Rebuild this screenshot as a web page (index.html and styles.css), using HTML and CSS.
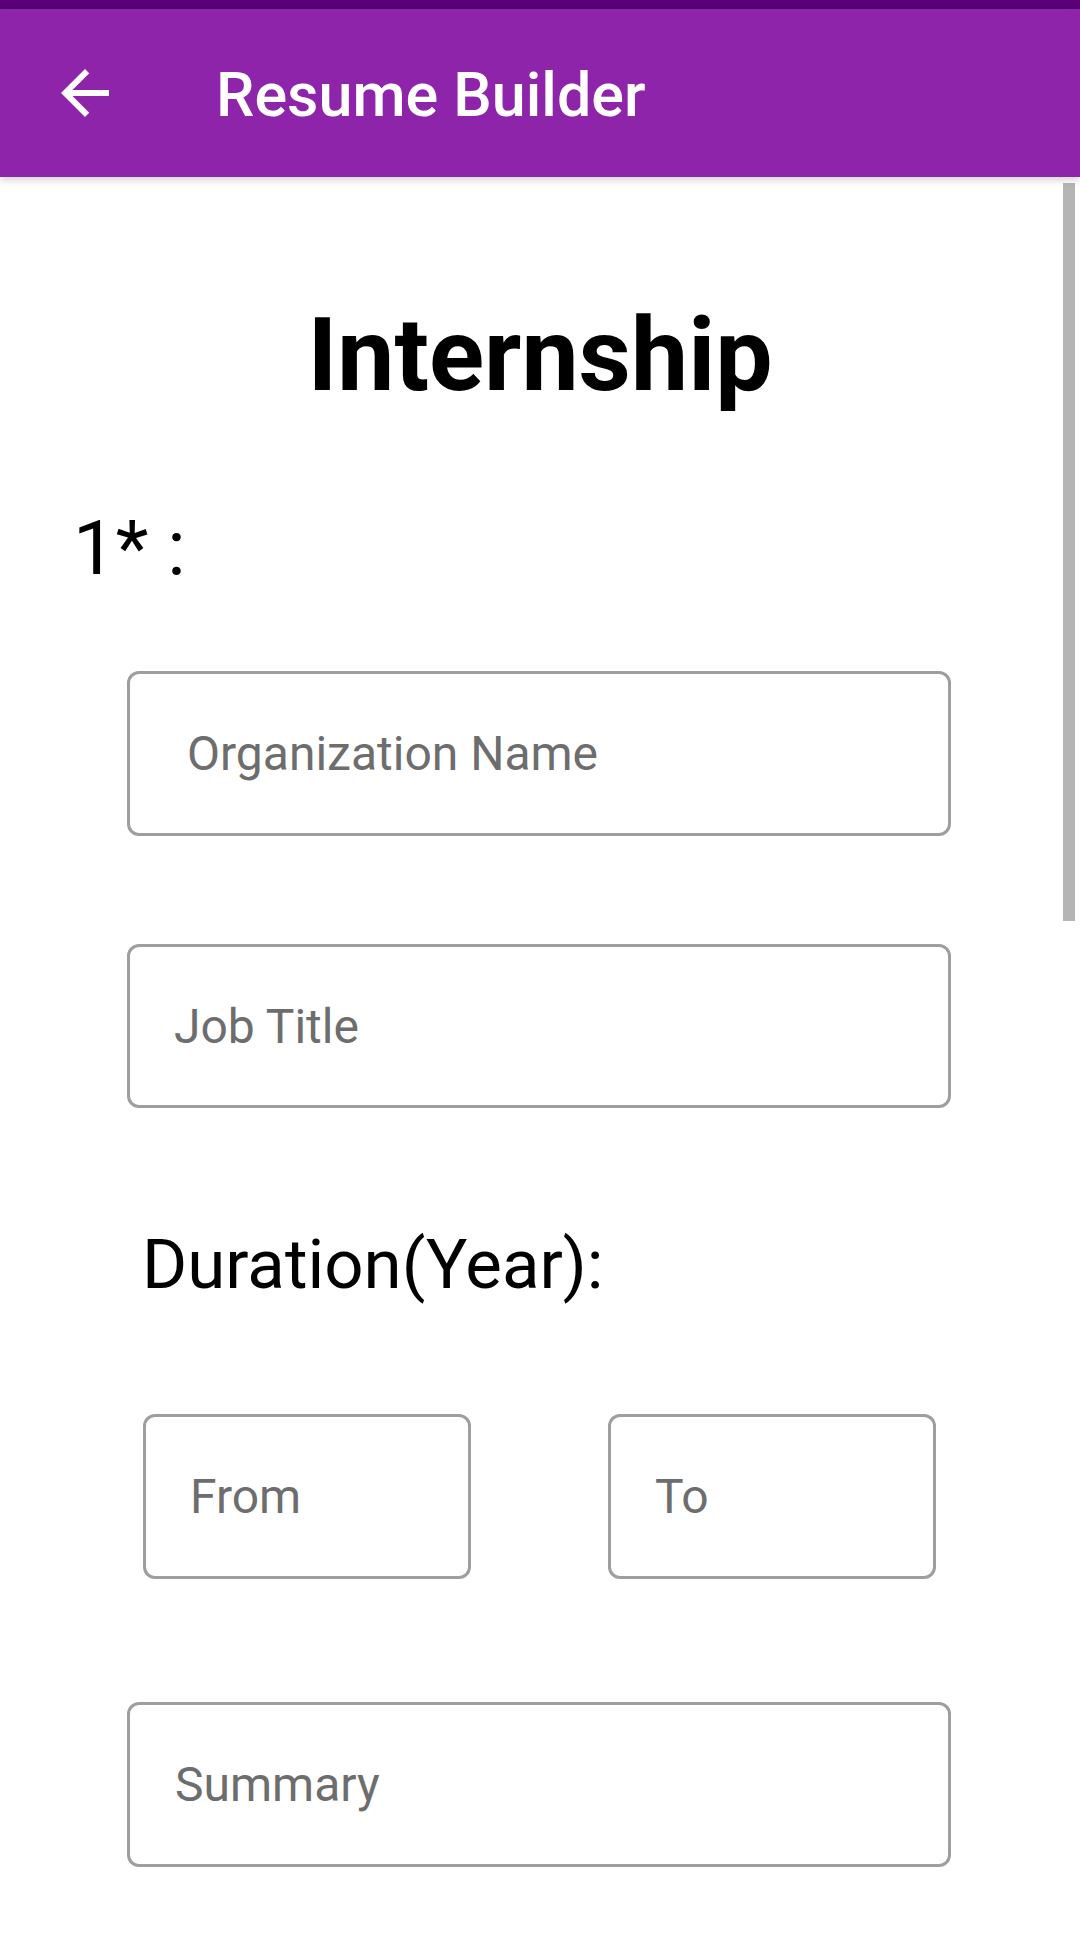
FILE: index.html
```html
<!DOCTYPE html>
<html lang="en">
<head>
<meta charset="utf-8">
<title>Resume Builder</title>
<link rel="stylesheet" href="styles.css">
</head>
<body>
<div class="statusbar"></div>
<header class="appbar">
  <svg class="back" viewBox="0 0 24 24" width="72" height="72" aria-hidden="true">
    <path d="M20 11H7.83l5.59-5.59L12 4l-8 8 8 8 1.41-1.41L7.83 13H20v-2z" fill="#ffffff"/>
  </svg>
  <h1 class="apptitle">Resume Builder</h1>
</header>
<main class="screen">
  <div class="scrollthumb"></div>
  <h2 class="heading">Internship</h2>
  <div class="entry-label">1* :</div>
  <div class="form">
    <input class="field field-org" type="text" placeholder="Organization Name">
    <input class="field field-job" type="text" placeholder="Job Title">
  </div>
  <div class="duration">
    <div class="duration-label">Duration(Year):</div>
    <div class="duration-row">
      <input class="field field-small" type="text" placeholder="From">
      <input class="field field-small" type="text" placeholder="To">
    </div>
  </div>
  <div class="form">
    <input class="field field-summary" type="text" placeholder="Summary">
  </div>
</main>
</body>
</html>
```
FILE: styles.css
```css
html, body {
  margin: 0;
  padding: 0;
  background: #ffffff;
}
body {
  width: 1080px;
  height: 1938px;
  overflow: hidden;
  font-family: Roboto, "Liberation Sans", sans-serif;
  color: #000000;
}
.statusbar {
  height: 9px;
  background: #5a0078;
}
.appbar {
  position: relative;
  z-index: 2;
  height: 168px;
  background: #8e24aa;
  display: flex;
  align-items: center;
  padding-left: 49px;
  box-shadow: 0 3px 8px rgba(0, 0, 0, 0.18);
}
.back {
  display: block;
  width: 72px;
  height: 72px;
  flex: none;
}
.apptitle {
  margin: 4px 0 0 95px;
  font-size: 61px;
  line-height: 61px;
  font-weight: 500;
  color: #ffffff;
}
.screen {
  position: relative;
  display: flex;
  flex-direction: column;
}
.scrollthumb {
  position: absolute;
  top: 6px;
  left: 1063px;
  width: 12px;
  height: 738px;
  background: #b5b5b5;
}
.heading {
  margin: 127px 0 0 0;
  text-align: center;
  font-size: 102px;
  line-height: 102px;
  font-weight: 700;
}
.entry-label {
  margin: 104px 0 0 73px;
  font-size: 76px;
  line-height: 76px;
}
.form {
  display: flex;
  flex-direction: column;
  padding-left: 127px;
  width: 824px;
}
.field {
  box-sizing: border-box;
  display: block;
  width: 100%;
  height: 165px;
  margin: 0;
  border: 3px solid #9e9e9e;
  border-radius: 12px;
  background: #ffffff;
  font-family: Roboto, "Liberation Sans", sans-serif;
  font-size: 48px;
  color: #000000;
  padding: 0 0 0 44px;
  outline: none;
}
.field::placeholder {
  color: #6d6d6d;
  opacity: 1;
}
.field-org {
  margin-top: 85px;
  padding-left: 57px;
}
.field-job {
  margin-top: 108px;
  height: 164px;
}
.duration {
  padding-left: 143px;
  width: 793px;
}
.duration-label {
  margin-top: 122px;
  font-size: 69px;
  line-height: 69px;
  margin-left: -1px;
}
.duration-row {
  margin-top: 115px;
  display: flex;
  justify-content: space-between;
}
.field-small {
  width: 328px;
  padding-left: 44px;
}
.field-summary {
  margin-top: 123px;
  padding-left: 45px;
}
```
